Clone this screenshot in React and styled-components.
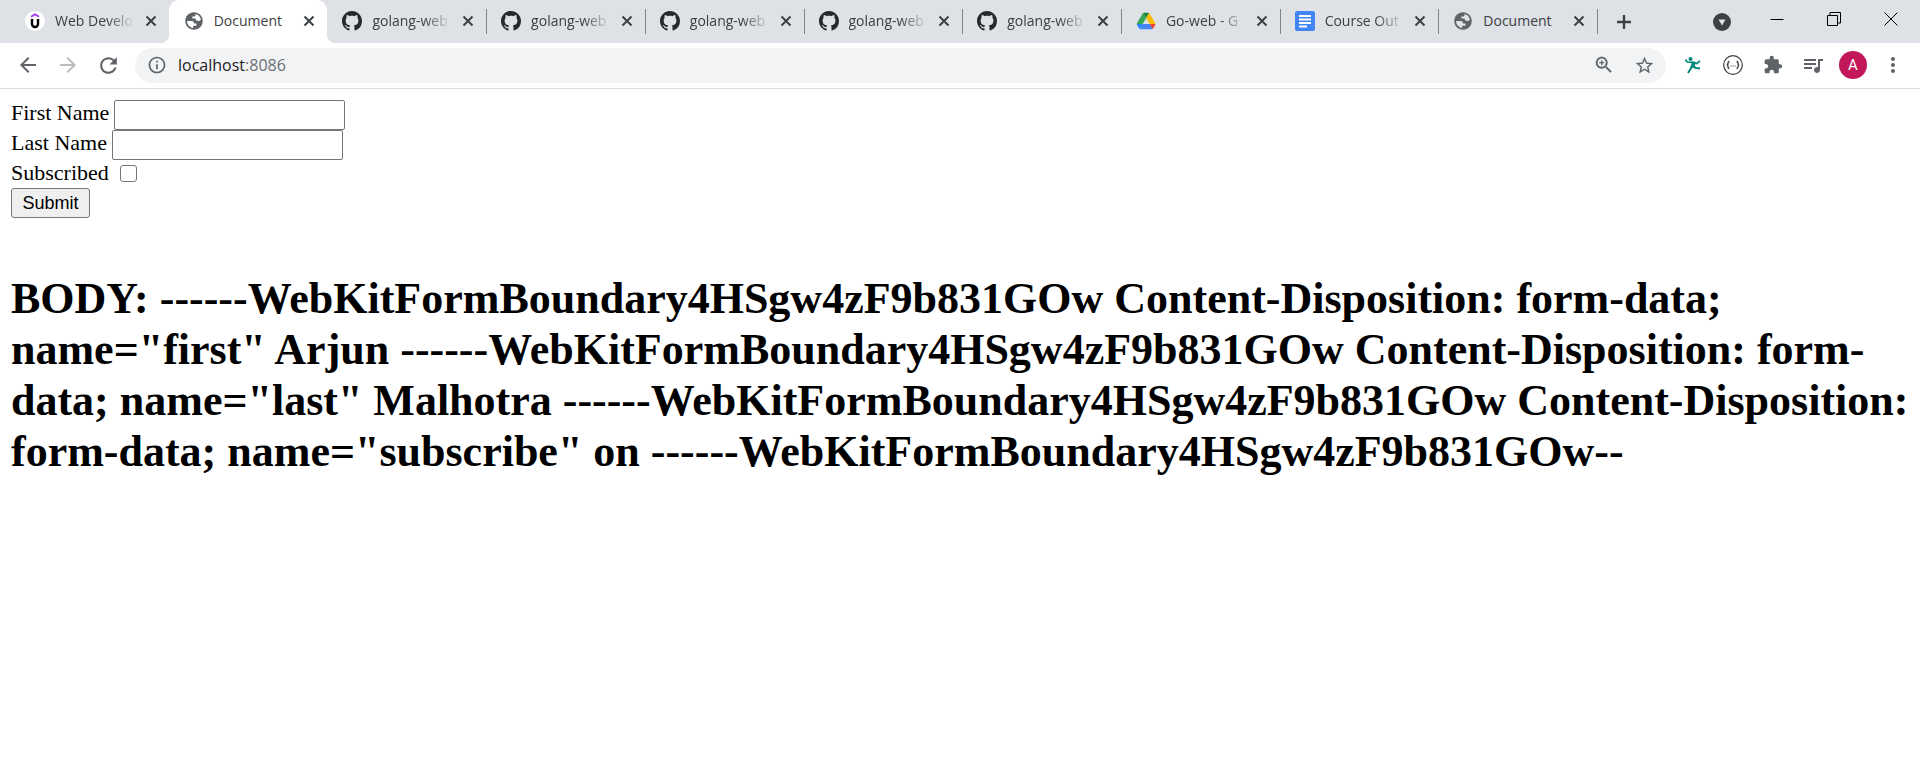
import React from "react";
import styled, { createGlobalStyle, css } from "styled-components";

const GlobalStyle = createGlobalStyle`
  body {
    margin: 0;
    background: #fff;
    color: #000;
    font-family: "Liberation Serif", serif;
    font-size: 22px;
  }
`;

const UI_FONT = css`
  font-family: "Open Sans", "Noto Sans", sans-serif;
`;

const TabStrip = styled.div`
  display: flex;
  height: 43px;
  padding-left: 10px;
  background: #dee1e6;
`;

const TabList = styled.div`
  display: flex;
  flex: 1;
  min-width: 0;
`;

const Tab = styled.div`
  position: relative;
  box-sizing: border-box;
  display: flex;
  flex: 1 1 0;
  min-width: 0;
  align-items: center;
  padding: 0 10px 1px 15px;
  ${(p) =>
    p.$active &&
    css`
      background: #fff;
      border-radius: 10px 10px 0 0;
      &::before,
      &::after {
        content: "";
        position: absolute;
        bottom: 0;
        width: 10px;
        height: 10px;
      }
      &::before {
        right: 100%;
        background: radial-gradient(circle at 0 0, transparent 10px, #fff 11px);
      }
      &::after {
        left: 100%;
        background: radial-gradient(circle at 100% 0, transparent 10px, #fff 11px);
      }
    `}
  ${(p) =>
    p.$divided &&
    css`
      &::after {
        content: "";
        position: absolute;
        right: -1px;
        top: 9px;
        width: 1px;
        height: 25px;
        background: #80868b;
      }
    `}
`;

const TabTitle = styled.span`
  ${UI_FONT}
  flex: 1;
  min-width: 0;
  margin: 0 8px 0 10px;
  overflow: hidden;
  white-space: nowrap;
  font-size: 14px;
  line-height: 20px;
  color: #3c4043;
  ${(p) =>
    p.$faded &&
    css`
      mask-image: linear-gradient(to right, #000 calc(100% - 28px), transparent);
    `}
`;

const IconButton = styled.button`
  display: flex;
  flex: none;
  align-items: center;
  justify-content: center;
  width: ${(p) => p.$width}px;
  height: ${(p) => p.$height || p.$width}px;
  padding: 0;
  border: 0;
  background: none;
  color: ${(p) => p.$color || "#5f6368"};
`;

const Icon = styled.svg`
  display: block;
  flex: none;
  width: ${(p) => p.$size}px;
  height: ${(p) => p.$size}px;
`;

const WindowControls = styled.div`
  display: flex;
  align-items: flex-start;
  width: 323px;
`;

const Spacer = styled.div`
  flex: 1;
`;

const Toolbar = styled.div`
  box-sizing: border-box;
  display: flex;
  align-items: center;
  height: 46px;
  padding: 0 7px 1px 8px;
  border-bottom: 1px solid #dadce0;
`;

const AddressBar = styled.div`
  display: flex;
  flex: 1;
  min-width: 0;
  align-items: center;
  height: 35px;
  margin: 0 7px;
  padding: 0 2px 0 12px;
  border-radius: 18px;
  background: #f1f3f4;
`;

const Address = styled.div`
  ${UI_FONT}
  flex: 1;
  margin-left: 11px;
  font-size: 16px;
  line-height: 24px;
  color: #202124;
`;

const Port = styled.span`
  color: #6b6f74;
`;

const Avatar = styled.button`
  flex: none;
  width: 28px;
  height: 28px;
  margin: 0 6px;
  padding: 0;
  border: 0;
  border-radius: 50%;
  background: #c2185b;
  color: #fff;
  font: 15px/28px Roboto, sans-serif;
`;

const Page = styled.main`
  padding: 11px;
`;

const Field = styled.div`
  display: flex;
  align-items: flex-start;
  gap: 5px;
  line-height: 26px;
`;

const CheckField = styled(Field)`
  align-items: center;
  gap: 11px;
  padding-bottom: 2px;
`;

const TextInput = styled.input`
  box-sizing: border-box;
  width: 231px;
  height: 30px;
  margin: 0;
  padding: 2px 4px;
  border: 1px solid #767676;
  border-radius: 2px;
  background: #fff;
  font: 18px "Liberation Sans", sans-serif;
`;

const CheckBox = styled.input`
  appearance: none;
  box-sizing: border-box;
  width: 17px;
  height: 17px;
  margin: 0;
  border: 1px solid #767676;
  border-radius: 3px;
  background: #fff;
`;

const SubmitButton = styled.button`
  display: block;
  box-sizing: border-box;
  width: 79px;
  height: 30px;
  padding: 0;
  border: 1px solid #767676;
  border-radius: 3px;
  background: #efefef;
  color: #000;
  font: 18px/26px "Liberation Sans", sans-serif;
`;

const Heading = styled.h1`
  margin: 55px 0 0;
  font-size: 44px;
  line-height: 51px;
`;

const Glyph = ({ size, path }) => (
  <Icon $size={size} viewBox="0 0 24 24" fill="currentColor" aria-hidden="true">
    <path d={path} />
  </Icon>
);

const PATHS = {
  back: "M20 11H7.83l5.59-5.59L12 4l-8 8 8 8 1.41-1.41L7.83 13H20v-2z",
  forward: "M4 13h12.17l-5.59 5.59L12 20l8-8-8-8-1.41 1.41L16.17 11H4v2z",
  reload:
    "M17.65 6.35C16.2 4.9 14.21 4 12 4c-4.42 0-7.99 3.58-7.99 8s3.57 8 7.99 8c3.73 0 6.84-2.55 7.73-6h-2.08c-.82 2.33-3.04 4-5.65 4-3.31 0-6-2.69-6-6s2.69-6 6-6c1.66 0 3.14.69 4.22 1.78L13 11h7V4l-2.35 2.35z",
  info: "M11 7h2v2h-2zm0 4h2v6h-2zm1-9C6.48 2 2 6.48 2 12s4.48 10 10 10 10-4.48 10-10S17.52 2 12 2zm0 18c-4.41 0-8-3.59-8-8s3.59-8 8-8 8 3.59 8 8-3.59 8-8 8z",
  zoom: "M15.5 14h-.79l-.28-.27C15.41 12.59 16 11.11 16 9.5 16 5.91 13.09 3 9.5 3S3 5.91 3 9.5 5.91 16 9.5 16c1.61 0 3.09-.59 4.23-1.57l.27.28v.79l5 4.99L20.49 19l-4.99-5zm-6 0C7.01 14 5 11.99 5 9.5S7.01 5 9.5 5 14 7.01 14 9.5 11.99 14 9.5 14zm.7-7.2H8.8v2H6.8v1.4h2v2h1.4v-2h2V8.8h-2v-2z",
  star: "M22 9.24l-7.19-.62L12 2 9.19 8.63 2 9.24l5.46 4.73L5.82 21 12 17.27 18.18 21l-1.63-7.03L22 9.24zM12 15.4l-3.76 2.27 1-4.28-3.32-2.88 4.38-.38L12 6.1l1.71 4.04 4.38.38-3.32 2.88 1 4.28L12 15.4z",
  extension:
    "M20.5 11H19V7c0-1.1-.9-2-2-2h-4V3.5C13 2.12 11.88 1 10.5 1S8 2.12 8 3.5V5H4c-1.1 0-1.99.9-1.99 2v3.8H3.5c1.49 0 2.7 1.21 2.7 2.7s-1.21 2.7-2.7 2.7H2V20c0 1.1.9 2 2 2h3.8v-1.5c0-1.49 1.21-2.7 2.7-2.7 1.49 0 2.7 1.21 2.7 2.7V22H17c1.1 0 2-.9 2-2v-4h1.5c1.38 0 2.5-1.12 2.5-2.5S21.88 11 20.5 11z",
  queue:
    "M15 6H3v2h12V6zm0 4H3v2h12v-2zM3 16h8v-2H3v2zM17 6v8.18c-.31-.11-.65-.18-1-.18-1.66 0-3 1.34-3 3s1.34 3 3 3 3-1.34 3-3V8h3V6h-5z",
  more: "M12 8c1.1 0 2-.9 2-2s-.9-2-2-2-2 .9-2 2 .9 2 2 2zm0 2c-1.1 0-2 .9-2 2s.9 2 2 2 2-.9 2-2-.9-2-2-2zm0 6c-1.1 0-2 .9-2 2s.9 2 2 2 2-.9 2-2-.9-2-2-2z",
};

const UdemyIcon = () => (
  <Icon $size={20} viewBox="0 0 20 20" aria-hidden="true">
    <circle cx="10" cy="10" r="10" fill="#fff" />
    <path d="M6 5.8 10 3.2l4 2.6" fill="none" stroke="#a435f0" strokeWidth="1.8" />
    <path d="M7 8v5a3 3 0 0 0 6 0V8" fill="none" stroke="#000" strokeWidth="2.4" />
  </Icon>
);

const GlobeIcon = () => (
  <Icon $size={20} viewBox="0 0 24 24" aria-hidden="true">
    <path
      fill="#5f6368"
      d="M12 1.5C6.2 1.5 1.5 6.2 1.5 12S6.2 22.5 12 22.5 22.5 17.8 22.5 12 17.8 1.5 12 1.5zM3.6 12h5.8c2 0 2.6 1.2 2.6 3h3v2.6h-4v2.7C7 20 3.8 16.5 3.6 12zm9.9-8.4c3 .5 5.500 2.700 6.500 5.400.5 1.300-.5 3-2.500 3-3 0-3.500-1.500-3.500-3h-4V6.500h2.500c.8 0 1.300-.5 1.300-1.300 0-.8.2-1.300-.3-1.600z"
    />
  </Icon>
);

const GithubIcon = () => (
  <Icon $size={20} viewBox="0 0 16 16" aria-hidden="true">
    <path
      fill="#24292e"
      d="M8 0C3.58 0 0 3.58 0 8c0 3.54 2.29 6.53 5.47 7.59.4.07.55-.17.55-.38 0-.19-.01-.82-.01-1.49-2.01.37-2.53-.49-2.69-.94-.09-.23-.48-.94-.82-1.13-.28-.15-.68-.52-.01-.53.63-.01 1.08.58 1.23.82.72 1.21 1.87.87 2.33.66.07-.52.28-.87.51-1.07-1.78-.2-3.64-.89-3.64-3.95 0-.87.31-1.59.82-2.15-.08-.2-.36-1.02.08-2.12 0 0 .67-.21 2.2.82.64-.18 1.32-.27 2-.27.68 0 1.36.09 2 .27 1.53-1.04 2.2-.82 2.2-.82.44 1.1.16 1.92.08 2.12.51.56.82 1.27.82 2.15 0 3.07-1.87 3.75-3.65 3.95.29.25.54.73.54 1.48 0 1.07-.01 1.93-.01 2.2 0 .21.15.46.55.38A8.013 8.013 0 0 0 16 8c0-4.42-3.58-8-8-8z"
    />
  </Icon>
);

const DriveIcon = () => (
  <Icon $size={20} viewBox="-4 -8 94 94" aria-hidden="true">
    <path fill="#2684fc" d="m6.6 66.850 3.850 6.650c.8 1.400 1.950 2.500 3.300 3.300l13.750-23.800h-27.500c0 1.550.4 3.100 1.200 4.500z" />
    <path fill="#34a853" d="m43.650 25-13.750-23.800c-1.350.8-2.500 1.900-3.300 3.300l-25.400 44a9.060 9.060 0 0 0 -1.200 4.500h27.500z" />
    <path fill="#ea4335" d="m73.550 76.800c1.350-.8 2.500-1.900 3.300-3.300l1.600-2.750 7.650-13.250c.8-1.400 1.200-2.950 1.200-4.500h-27.502l5.852 11.500z" />
    <path fill="#188038" d="m43.650 25 13.750-23.800c-1.350-.8-2.900-1.200-4.500-1.200h-18.500c-1.600 0-3.150.45-4.500 1.200z" />
    <path fill="#4285f4" d="m59.800 53h-32.300l-13.750 23.800c1.350.8 2.900 1.200 4.500 1.200h50.800c1.600 0 3.150-.45 4.500-1.200z" />
    <path fill="#fbbc04" d="m73.400 26.500-12.700-22c-.8-1.400-1.950-2.500-3.300-3.300l-13.750 23.800 16.150 28h27.450c0-1.550-.4-3.100-1.200-4.500z" />
  </Icon>
);

const DocsIcon = () => (
  <Icon $size={20} viewBox="0 0 20 20" aria-hidden="true">
    <rect width="20" height="20" rx="2" fill="#4285f4" />
    <path d="M4 5h12M4 8.500h12M4 12h12M4 15.500h8" stroke="#fff" strokeWidth="2" />
  </Icon>
);

const CloseIcon = () => (
  <Icon $size={12} viewBox="0 0 12 12" aria-hidden="true">
    <path d="m1.500 1.500 9 9m0-9-9 9" stroke="#3c4043" strokeWidth="2" />
  </Icon>
);

const RunnerIcon = () => (
  <Icon $size={18} viewBox="0 0 18 18" fill="none" stroke="#00897b" aria-hidden="true">
    <circle cx="6.500" cy="3" r="2" fill="#00897b" stroke="none" />
    <path d="M1.500 3.500 3 6l5.500.5 4 1 3.500-2.500" strokeWidth="1.700" />
    <path d="M10 5.500 8.500 11" strokeWidth="3.800" />
    <path d="m8 10-1.500 3-2.500 4M8.500 10.500l3.500 1.500 4 .5" strokeWidth="2" />
  </Icon>
);

const JsonIcon = () => (
  <Icon $size={20} viewBox="0 0 20 20" fill="none" stroke="#3c4043" aria-hidden="true">
    <circle cx="10" cy="10" r="9.300" strokeWidth="1.200" />
    <path d="M6.500 6.500c-1.500 0-1.500.5-1.500 1.700S4.700 10 3.800 10c.9 0 1.200.6 1.200 1.800s0 1.700 1.500 1.700M13.500 6.500c1.500 0 1.500.5 1.500 1.700s.3 1.800 1.200 1.800c-.9 0-1.200.6-1.200 1.800s0 1.700-1.500 1.700" strokeWidth="1.500" />
    <path d="M7.500 11h1m1 0h1m1 0h1" strokeWidth="1" />
  </Icon>
);

const TABS = [
  { title: "Web Develo", icon: UdemyIcon, faded: true },
  { title: "Document", icon: GlobeIcon, active: true },
  { title: "golang-web", icon: GithubIcon, divided: true, faded: true },
  { title: "golang-web", icon: GithubIcon, divided: true, faded: true },
  { title: "golang-web", icon: GithubIcon, divided: true, faded: true },
  { title: "golang-web", icon: GithubIcon, divided: true, faded: true },
  { title: "golang-web", icon: GithubIcon, divided: true, faded: true },
  { title: "Go-web - G", icon: DriveIcon, divided: true, faded: true },
  { title: "Course Out", icon: DocsIcon, divided: true, faded: true },
  { title: "Document", icon: GlobeIcon, divided: true },
];

const BODY_TEXT =
  'BODY: ------WebKitFormBoundary4HSgw4zF9b831GOw Content-Disposition: form-data; name="first" Arjun ------WebKitFormBoundary4HSgw4zF9b831GOw Content-Disposition: form-data; name="last" Malhotra ------WebKitFormBoundary4HSgw4zF9b831GOw Content-Disposition: form-data; name="subscribe" on ------WebKitFormBoundary4HSgw4zF9b831GOw--';

export default function App() {
  return (
    <>
      <GlobalStyle />
      <TabStrip>
        <TabList>
          {TABS.map(({ title, icon: TabIcon, active, divided, faded }, i) => (
            <Tab key={i} $active={active} $divided={divided}>
              <TabIcon />
              <TabTitle $faded={faded}>{title}</TabTitle>
              <IconButton $width={16} aria-label="Close tab">
                <CloseIcon />
              </IconButton>
            </Tab>
          ))}
        </TabList>
        <WindowControls>
          <IconButton $width={54} $height={43} aria-label="New tab">
            <Icon $size={16} viewBox="0 0 16 16">
              <path d="M8 1v14M1 8h14" stroke="#3c4043" strokeWidth="2.400" />
            </Icon>
          </IconButton>
          <Spacer />
          <IconButton $width={54} $height={43} aria-label="Search tabs">
            <Icon $size={18} viewBox="0 0 18 18">
              <circle cx="9" cy="9" r="9" fill="#3c4043" />
              <path d="M5.500 6.500h7L9 12.500z" fill="#dee1e6" />
            </Icon>
          </IconButton>
          <IconButton $width={56} $height={37} aria-label="Minimize">
            <Icon $size={14} viewBox="0 0 14 14">
              <path d="M.5 7.500h13" stroke="#000" />
            </Icon>
          </IconButton>
          <IconButton $width={57} $height={37} aria-label="Restore">
            <Icon $size={14} viewBox="0 0 14 14">
              <path d="M.5 3.500h10v10H.5zM3 3V.5h10.500V11H11" fill="none" stroke="#000" />
            </Icon>
          </IconButton>
          <IconButton $width={58} $height={37} aria-label="Close">
            <Icon $size={14} viewBox="0 0 14 14">
              <path d="m.5.5 13 13m0-13-13 13" stroke="#000" />
            </Icon>
          </IconButton>
        </WindowControls>
      </TabStrip>
      <Toolbar>
        <IconButton $width={40} aria-label="Back">
          <Glyph size={24} path={PATHS.back} />
        </IconButton>
        <IconButton $width={40} $color="#babcbe" aria-label="Forward">
          <Glyph size={24} path={PATHS.forward} />
        </IconButton>
        <IconButton $width={40} aria-label="Reload">
          <Glyph size={25} path={PATHS.reload} />
        </IconButton>
        <AddressBar>
          <IconButton $width={20} aria-label="Site information">
            <Glyph size={20} path={PATHS.info} />
          </IconButton>
          <Address>
            localhost<Port>:8086</Port>
          </Address>
          <IconButton $width={40} $height={35} aria-label="Zoom">
            <Glyph size={22} path={PATHS.zoom} />
          </IconButton>
          <IconButton $width={40} $height={35} aria-label="Bookmark">
            <Glyph size={21} path={PATHS.star} />
          </IconButton>
        </AddressBar>
        <IconButton $width={40} aria-label="Runner extension">
          <RunnerIcon />
        </IconButton>
        <IconButton $width={40} aria-label="JSON extension">
          <JsonIcon />
        </IconButton>
        <IconButton $width={40} aria-label="Extensions">
          <Glyph size={20} path={PATHS.extension} />
        </IconButton>
        <IconButton $width={40} aria-label="Media">
          <Glyph size={24} path={PATHS.queue} />
        </IconButton>
        <Avatar aria-label="Profile">A</Avatar>
        <IconButton $width={40} aria-label="Menu">
          <Glyph size={24} path={PATHS.more} />
        </IconButton>
      </Toolbar>
      <Page>
        <form onSubmit={(e) => e.preventDefault()}>
          <Field>
            <label htmlFor="first">First Name</label>
            <TextInput id="first" name="first" type="text" />
          </Field>
          <Field>
            <label htmlFor="last">Last Name</label>
            <TextInput id="last" name="last" type="text" />
          </Field>
          <CheckField>
            <label htmlFor="subscribe">Subscribed</label>
            <CheckBox id="subscribe" name="subscribe" type="checkbox" />
          </CheckField>
          <SubmitButton type="submit">Submit</SubmitButton>
        </form>
        <Heading>{BODY_TEXT}</Heading>
      </Page>
    </>
  );
}
